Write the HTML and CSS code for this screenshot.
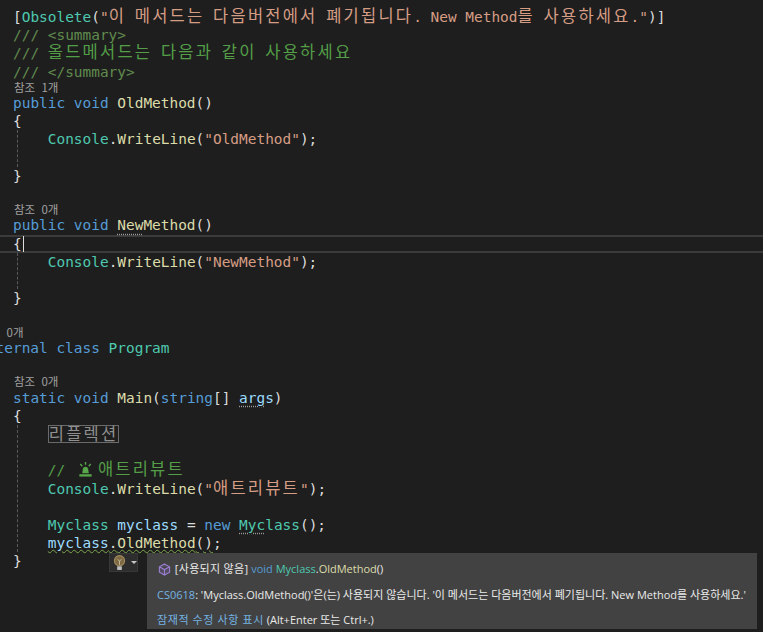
FILE: index.html
```html
<!DOCTYPE html>
<html lang="ko">
<head>
<meta charset="utf-8">
<title>Obsolete</title>
<link rel="stylesheet" href="styles.css">
</head>
<body>
<main class="editor">
  <div class="line"><span class="p">[</span><span class="t">Obsolete</span><span class="p">(</span><span class="s">"<span class="ko">이</span> <span class="ko">메서드는</span> <span class="ko">다음버전에서</span> <span class="ko">폐기됩니다</span>. New Method<span class="ko">를</span> <span class="ko">사용하세요</span>."</span><span class="p">)]</span></div>
  <div class="line c"><span class="cd">/// &lt;summary&gt;</span></div>
  <div class="line c"><span class="cd">///</span> <span class="ko">올드메서드는</span> <span class="ko">다음과</span> <span class="ko">같이</span> <span class="ko">사용하세요</span></div>
  <div class="line c"><span class="cd">/// &lt;/summary&gt;</span></div>
  <div class="lens">참조 1개</div>
  <div class="line"><span class="k">public void</span> <span class="m">OldMethod</span><span class="p">()</span></div>
  <div class="line p">{</div>
  <div class="body">
    <div class="line"><span class="t">Console</span><span class="p">.</span><span class="m">WriteLine</span><span class="p">(</span><span class="s">"OldMethod"</span><span class="p">);</span></div>
    <div class="line"></div>
  </div>
  <div class="line p">}</div>
  <div class="line"></div>
  <div class="lens">참조 0개</div>
  <div class="line"><span class="k">public void</span> <span class="m"><span class="dots">New</span>Method</span><span class="p">()</span></div>
  <div class="line current p">{<span class="caret"></span></div>
  <div class="body">
    <div class="line"><span class="t">Console</span><span class="p">.</span><span class="m">WriteLine</span><span class="p">(</span><span class="s">"NewMethod"</span><span class="p">);</span></div>
    <div class="line"></div>
  </div>
  <div class="line p">}</div>
  <div class="line"></div>
  <div class="lens outdent">참조 0개</div>
  <div class="line outdent"><span class="k">internal class</span> <span class="t">Program</span></div>
  <div class="line"></div>
  <div class="lens">참조 0개</div>
  <div class="line"><span class="k">static void</span> <span class="m">Main</span><span class="p">(</span><span class="k">string</span><span class="p">[]</span> <span class="v"><span class="dots">arg</span>s</span><span class="p">)</span></div>
  <div class="line p">{</div>
  <div class="body">
    <div class="line"><span class="region ko">리플렉션</span></div>
    <div class="line"></div>
    <div class="line c">// <svg class="siren" viewBox="0 0 18 18" aria-hidden="true"><path d="M9 1v3M3.500 3l2 2.500M14.500 3l-2 2.500" fill="none" stroke="#57a64a" stroke-width="1.500"/><path d="M5.500 13l.8-5q.4-2 2.700-2t2.700 2l.8 5z" fill="#57a64a"/><path d="M2.500 14h13v2.500h-13z" fill="#57a64a"/></svg><span class="ko">애트리뷰트</span></div>
    <div class="line"><span class="t">Console</span><span class="p">.</span><span class="m">WriteLine</span><span class="p">(</span><span class="s">"<span class="ko">애트리뷰트</span>"</span><span class="p">);</span></div>
    <div class="line"></div>
    <div class="line"><span class="t">Myclass</span> <span class="v">myclass</span> <span class="p">=</span> <span class="k">new</span> <span class="t"><span class="dots">Myc</span>lass</span><span class="p">();</span></div>
    <div class="line"><span class="squiggle"><span class="v">myclass</span><span class="p">.</span><span class="m">OldMethod</span><span class="p">()</span></span><span class="p">;</span></div>
  </div>
  <div class="line p">}</div>
</main>

<div class="bulb">
  <svg class="bulb-icon" viewBox="0 0 14 17" aria-hidden="true"><circle cx="7" cy="6" r="5.500" fill="#7d6a45"/><circle cx="7" cy="6" r="5.500" fill="none" stroke="#a08a5c" stroke-width="1.200"/><path d="M5 4.500l2 2 2-2M7 6.500v4" fill="none" stroke="#c9bd9c" stroke-width="1"/><path d="M4.500 12h5v4h-5z" fill="#bdbdbd"/></svg>
  <span class="bulb-arrow"></span>
</div>

<aside class="tip">
  <div class="tip-row"><svg class="cube" viewBox="0 0 14 14" aria-hidden="true"><path d="M7 1l5.500 3v6L7 13l-5.500-3V4zM1.500 4L7 7l5.500-3M7 7v6" fill="#8a6fc0" fill-opacity=".25" stroke="#9a7fd0" stroke-width="1.200"/></svg> <span class="tag">[사용되지 않음]</span> <span class="tip-k">void</span> <span class="tip-t">Myclass</span>.<span class="tip-m">OldMethod</span>()</div>
  <div class="tip-row"><span class="tip-link">CS0618</span>: 'Myclass.OldMethod()'은(는) 사용되지 않습니다. '이 메서드는 다음버전에서 폐기됩니다. New Method를 사용하세요.'</div>
  <div class="tip-row"><span class="tip-link fix">잠재적 수정 사항 표시</span> (Alt+Enter 또는 Ctrl+.)</div>
</aside>
</body>
</html>
```

FILE: styles.css
```css
html, body {
  margin: 0;
  height: 632px;
  overflow: hidden;
  background: #1e1e1e;
}

.editor {
  height: 624px;
  padding: 8px 0 0 13px;
  overflow: hidden;
  font: 14.45px/18.2px "DejaVu Sans Mono", "Noto Sans CJK KR", monospace;
  color: #dcdcdc;
}

.line {
  height: 18.2px;
  line-height: 18.2px;
  white-space: pre;
}

.ko {
  font-family: "Noto Sans CJK KR", sans-serif;
  font-size: 16.5px;
  line-height: 0;
  letter-spacing: 2.22px;
}

.p { color: #dcdcdc; }
.k { color: #569cd6; }
.t { color: #4ec9b0; }
.m { color: #dcdcaa; }
.v { color: #9cdcfe; }
.s { color: #d69d85; }
.c { color: #549e48; }
.cd { color: #608b4e; }

.lens {
  height: 13.3px;
  padding-left: 1px;
  font: 11.5px/13.3px "Noto Sans CJK KR", sans-serif;
  word-spacing: 3px;
  color: #a0a0a0;
}

.outdent {
  margin-left: -34.8px;
}

.body {
  margin-left: 4px;
  padding-left: 29.8px;
  border-left: 1px dashed #5a5a5a;
}

.current {
  margin-left: -13px;
  padding-left: 13px;
  box-shadow: inset 0 2px 0 #3b3b3b, inset 0 -2px 0 #3b3b3b;
}

.caret {
  display: inline-block;
  width: 1px;
  height: 16px;
  margin-left: 1px;
  vertical-align: -3px;
  background: #dcdcdc;
}

.dots {
  text-decoration: underline dotted #9a9a9a;
  text-underline-offset: 3px;
}

.squiggle {
  text-decoration: underline wavy #7fa650 1px;
  text-underline-offset: 1px;
}

.region {
  display: inline-block;
  box-sizing: border-box;
  height: 18px;
  border: 1px solid #6a6a6a;
  line-height: 15px;
  color: #8f8f8f;
  vertical-align: top;
}

.siren {
  width: 17px;
  height: 17px;
  margin: 0 4px 0 3px;
  vertical-align: -3px;
}

.bulb {
  position: absolute;
  left: 109px;
  top: 553px;
  display: flex;
  align-items: center;
  gap: 5px;
  box-sizing: border-box;
  width: 29px;
  height: 19px;
  padding-left: 3px;
  background: #2d2d2d;
  border: 1px solid #383838;
}

.bulb-icon {
  width: 13px;
  height: 16px;
}

.bulb-arrow {
  width: 0;
  height: 0;
  border: 3px solid transparent;
  border-top: 3px solid #c8c8c8;
  border-bottom: 0;
}

.tip {
  position: absolute;
  left: 147px;
  top: 553px;
  box-sizing: border-box;
  width: 610px;
  height: 76px;
  padding: 3px 0 0 10px;
  background: #424242;
  font: 11px/26px "Open Sans", "Noto Sans CJK KR", sans-serif;
  color: #eaeaea;
  white-space: nowrap;
}

.tip-row {
  height: 25.500px;
}

.cube {
  width: 13px;
  height: 13px;
  margin: 0 1px;
  vertical-align: -3px;
}

.tag { letter-spacing: .3px; }
.tip-k { color: #569cd6; }
.tip-t { color: #4ec9b0; }
.tip-m { color: #dcdcaa; }
.tip-link { color: #75b4e3; }
.fix { letter-spacing: .6px; }
```
